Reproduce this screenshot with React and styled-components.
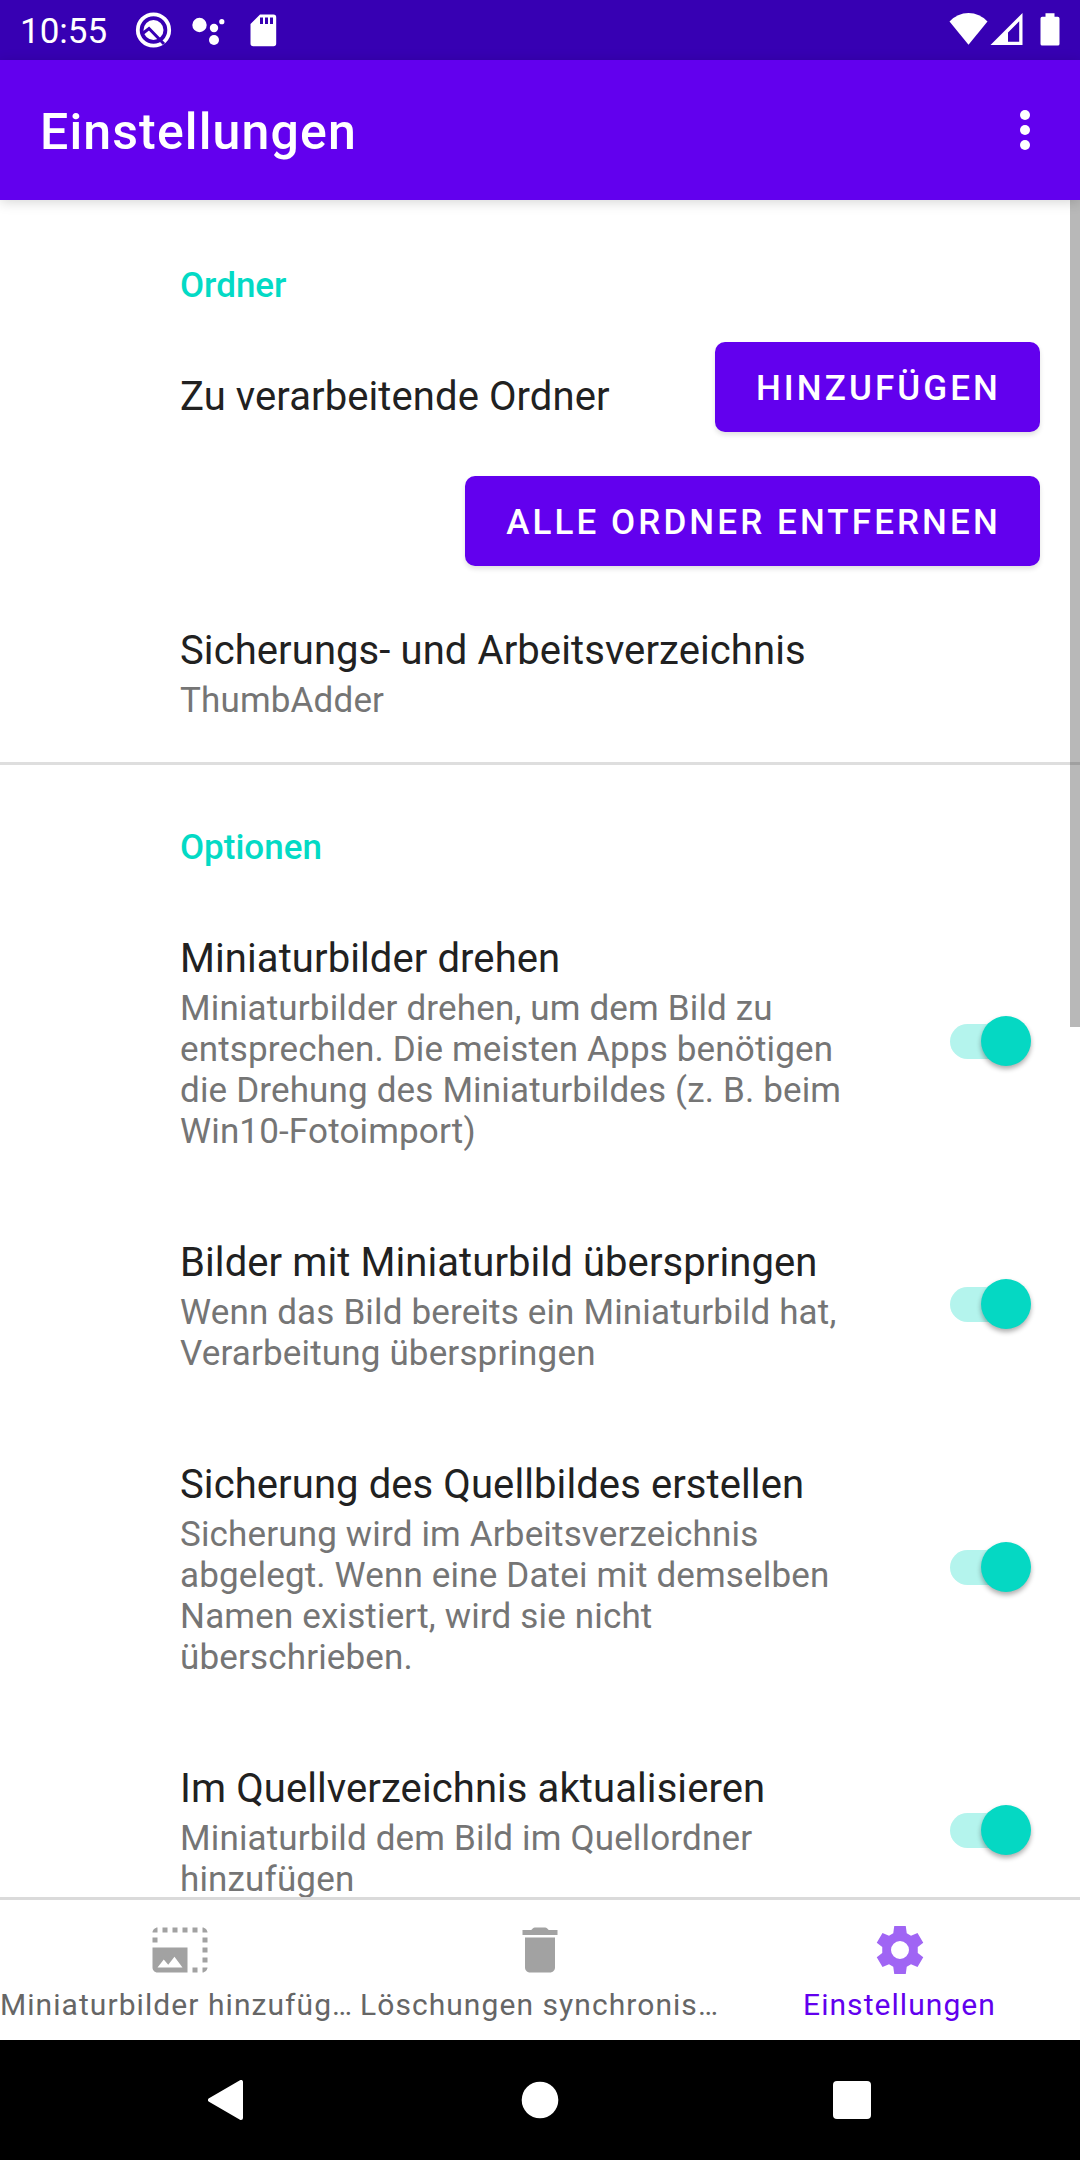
import React from "react";
import styled, { createGlobalStyle } from "styled-components";

const GlobalStyle = createGlobalStyle`
  * { box-sizing: border-box; }
  body {
    margin: 0;
    background: #fff;
    font-family: Roboto, "Liberation Sans", sans-serif;
  }
`;

const Screen = styled.div`
  width: 1080px;
  height: 2160px;
  display: flex;
  flex-direction: column;
  overflow: hidden;
  background: #fff;
`;

const StatusBar = styled.div`
  height: 60px;
  flex: none;
  display: flex;
  align-items: center;
  padding: 0 20px;
  background: #3700b3;
  color: #fff;
`;

const Clock = styled.span`
  width: 113px;
  font-size: 35px;
  line-height: 41px;
  padding-top: 2px;
`;

const StatusIcon = styled.svg`
  display: block;
  flex: none;
  width: ${(p) => p.$w}px;
  height: 60px;
  margin-left: ${(p) => p.$gap || 0}px;
  fill: #fff;
`;

const Spacer = styled.div`
  flex: 1;
`;

const AppBar = styled.header`
  height: 140px;
  flex: none;
  display: flex;
  align-items: center;
  justify-content: space-between;
  padding: 4px 50px 0 40px;
  background: #6200ee;
  color: #fff;
  box-shadow: 0 2px 12px rgba(0, 0, 0, 0.17);
  z-index: 1;
`;

const AppTitle = styled.h1`
  margin: 0;
  font-size: 50px;
  line-height: 60px;
  font-weight: 500;
  letter-spacing: 1.14px;
`;

const MenuButton = styled.button`
  display: flex;
  flex-direction: column;
  gap: 5px;
  padding: 0;
  margin-bottom: 4px;
  border: 0;
  background: none;
`;

const MenuDot = styled.span`
  width: 10px;
  height: 10px;
  border-radius: 50%;
  background: #fff;
`;

const Content = styled.main`
  position: relative;
  height: 1697px;
  flex: none;
  overflow: hidden;
`;

const ScrollThumb = styled.div`
  position: absolute;
  top: 0;
  right: 0;
  width: 10px;
  height: 827px;
  background: rgba(0, 0, 0, 0.28);
`;

const Category = styled.h2`
  height: 128px;
  margin: 0;
  padding: ${(p) => (p.$divided ? 62 : 65)}px 0 0 180px;
  border-top: ${(p) => (p.$divided ? "3px solid #dedede" : "0")};
  color: #03dac5;
  font-size: 35px;
  line-height: 41px;
  font-weight: 500;
`;

const Row = styled.div`
  display: flex;
  justify-content: space-between;
  padding: 45px 40px ${(p) => (p.$last ? 41 : 42)}px 180px;
`;

const FolderRow = styled(Row)`
  height: 254px;
  padding: 14px 40px 0 180px;
`;

const FolderLabel = styled.div`
  width: 0;
  padding-top: 31px;
  white-space: nowrap;
`;

const Actions = styled.div`
  display: flex;
  flex-direction: column;
  align-items: flex-end;
  gap: 44px;
`;

const Button = styled.button`
  height: 90px;
  width: ${(p) => p.$w}px;
  padding: 2px 0 0 2px;
  border: 0;
  border-radius: 10px;
  background: #6200ee;
  color: #fff;
  font-family: inherit;
  font-size: 35px;
  font-weight: 500;
  letter-spacing: 3.09px;
  text-transform: uppercase;
  white-space: nowrap;
  box-shadow: 0 3px 5px rgba(0, 0, 0, 0.12);
`;

const RowText = styled.div`
  width: 680px;
`;

const RowTitle = styled.div`
  font-size: 40px;
  line-height: 47px;
  letter-spacing: 0.09px;
  color: #212121;
  white-space: nowrap;
`;

const Summary = styled.div`
  margin-top: 6px;
  font-size: 35px;
  line-height: 41px;
  letter-spacing: 0.16px;
  color: #757575;
`;

const Toggle = styled.div`
  align-self: center;
  width: 75px;
  height: 35px;
  margin: 0 15px 5px 0;
  display: flex;
  align-items: center;
  justify-content: flex-end;
  border-radius: 18px;
  background: #b4f4ed;
`;

const ToggleThumb = styled.div`
  flex: none;
  width: 50px;
  height: 50px;
  margin-right: -6px;
  border-radius: 50%;
  background: #05d8c3;
  box-shadow: 0 3px 5px rgba(0, 0, 0, 0.32);
`;

const TabBar = styled.nav`
  height: 143px;
  flex: none;
  display: grid;
  grid-template-columns: repeat(3, 360px);
  border-top: 3px solid #dadada;
  background: #fff;
`;

const Tab = styled.div`
  display: flex;
  flex-direction: column;
  align-items: center;
  padding-top: 20px;
  color: ${(p) => (p.$active ? "#6200ee" : "#666")};
`;

const TabIcon = styled.svg`
  display: block;
  width: 60px;
  height: 60px;
  fill: currentColor;
  opacity: 0.6;
`;

const TabLabel = styled.span`
  width: 360px;
  margin-top: 7px;
  padding-right: 1px;
  font-size: 30px;
  line-height: 35px;
  letter-spacing: 1.06px;
  white-space: nowrap;
  text-align: ${(p) => (p.$fill ? "left" : "center")};
`;

const NavBar = styled.div`
  height: 120px;
  flex: none;
  display: flex;
  align-items: center;
  justify-content: space-between;
  padding: 0 208px;
  background: #000;
`;

const NavIcon = styled.svg`
  display: block;
  width: 40px;
  height: 40px;
  fill: #fff;
`;

const options = [
  {
    title: "Miniaturbilder drehen",
    lines: [
      "Miniaturbilder drehen, um dem Bild zu",
      "entsprechen. Die meisten Apps benötigen",
      "die Drehung des Miniaturbildes (z. B. beim",
      "Win10-Fotoimport)",
    ],
  },
  {
    title: "Bilder mit Miniaturbild überspringen",
    lines: ["Wenn das Bild bereits ein Miniaturbild hat,", "Verarbeitung überspringen"],
  },
  {
    title: "Sicherung des Quellbildes erstellen",
    lines: [
      "Sicherung wird im Arbeitsverzeichnis",
      "abgelegt. Wenn eine Datei mit demselben",
      "Namen existiert, wird sie nicht",
      "überschrieben.",
    ],
  },
  {
    title: "Im Quellverzeichnis aktualisieren",
    lines: ["Miniaturbild dem Bild im Quellordner", "hinzufügen"],
  },
];

const PhotoSizeIcon = () => (
  <TabIcon viewBox="0 0 24 24">
    <path d="M21 15h2v2h-2v-2zm0-4h2v2h-2v-2zm2 8h-2v2c1 0 2-1 2-2zM13 3h2v2h-2V3zm8 4h2v2h-2V7zm0-4v2h2c0-1-1-2-2-2zM1 7h2v2H1V7zm16-4h2v2h-2V3zm0 16h2v2h-2v-2zM3 3C2 3 1 4 1 5h2V3zm6 0h2v2H9V3zM5 3h2v2H5V3zm-4 8v8c0 1.1.9 2 2 2h12V11H1zm2 8l2.5-3.21 1.79 2.15 2.5-3.22L13 19H3z" />
  </TabIcon>
);

const DeleteIcon = () => (
  <TabIcon viewBox="0 0 24 24">
    <path d="M6 19c0 1.1.9 2 2 2h8c1.1 0 2-.9 2-2V7H6v12zM19 4h-3.5l-.71-.71c-.18-.18-.44-.29-.7-.29H9.91c-.26 0-.52.11-.7.29L8.5 4H5v2h14V4z" />
  </TabIcon>
);

const SettingsIcon = () => (
  <TabIcon viewBox="0 0 24 24">
    <path
      fillRule="evenodd"
      d="M9.7 2.4H14.3L14.7 5.3 16.4 6.3 19 5.2 21.3 9.1 19.1 10.8V13.2L21.3 14.9 19 18.8 16.4 17.700 14.700 18.700 14.300 21.600H9.700L9.300 18.700 7.600 17.700 5 18.800 2.700 14.900 4.900 13.200V10.800L2.700 9.100 5 5.200 7.600 6.300 9.300 5.300zM12 8.400a3.600 3.600 0 1 0 0 7.200 3.600 3.600 0 1 0 0-7.200z"
    />
  </TabIcon>
);

export default function App() {
  return (
    <>
      <GlobalStyle />
      <Screen>
        <StatusBar>
          <Clock>10:55</Clock>
          <StatusIcon $w={42} viewBox="133 0 42 60">
            <circle cx="153.500" cy="30" r="15.700" fill="none" stroke="#fff" strokeWidth="3.800" />
            <circle cx="153.500" cy="30" r="10" />
            <path d="M142 34l7-5.500L164 44" fill="none" stroke="#3700b3" strokeWidth="3" />
          </StatusIcon>
          <StatusIcon $w={42} $gap={14} viewBox="189 0 42 60">
            <circle cx="199.500" cy="25" r="7.200" />
            <circle cx="214" cy="28" r="4.200" />
            <circle cx="221.800" cy="21.700" r="2.600" />
            <circle cx="214" cy="40" r="5" />
          </StatusIcon>
          <StatusIcon $w={32} $gap={16} viewBox="247 0 32 60">
            <path
              fillRule="evenodd"
              d="M260 14.500h13.500a2.700 2.700 0 0 1 2.700 2.700v26.400a2.700 2.700 0 0 1-2.700 2.700h-20.300a2.700 2.700 0 0 1-2.700-2.700V24zM260 17.500v6.500h3v-6.500zM265 17.500v6.500h3v-6.500zM270 17.500v6.500h3v-6.500z"
            />
          </StatusIcon>
          <Spacer />
          <StatusIcon $w={39} viewBox="949.500 0 39 60">
            <path d="M969 44.700L950 21.500Q958 13 969 13T988 21.500z" />
          </StatusIcon>
          <StatusIcon $w={34} $gap={2} viewBox="990.500 0 34 60">
            <path
              fillRule="evenodd"
              d="M991 45L1023 13V45zM1008.500 32.500V41.700H1019.700V21.300z"
            />
          </StatusIcon>
          <StatusIcon $w={20} $gap={16} viewBox="1040.500 0 20 60">
            <path d="M1046 13.300h9v3.400h3.300a1.700 1.700 0 0 1 1.700 1.700v25.500a1.700 1.700 0 0 1-1.700 1.700h-15.600a1.700 1.700 0 0 1-1.700-1.700V18.400a1.700 1.700 0 0 1 1.700-1.700h3.300z" />
          </StatusIcon>
        </StatusBar>

        <AppBar>
          <AppTitle>Einstellungen</AppTitle>
          <MenuButton aria-label="Weitere Optionen">
            <MenuDot />
            <MenuDot />
            <MenuDot />
          </MenuButton>
        </AppBar>

        <Content>
          <Category>Ordner</Category>
          <FolderRow>
            <FolderLabel>
              <RowTitle>Zu verarbeitende Ordner</RowTitle>
            </FolderLabel>
            <Actions>
              <Button $w={325}>Hinzufügen</Button>
              <Button $w={575}>Alle Ordner entfernen</Button>
            </Actions>
          </FolderRow>
          <Row $last>
            <RowText>
              <RowTitle>Sicherungs- und Arbeitsverzeichnis</RowTitle>
              <Summary>ThumbAdder</Summary>
            </RowText>
          </Row>

          <Category $divided>Optionen</Category>
          {options.map((option) => (
            <Row key={option.title}>
              <RowText>
                <RowTitle>{option.title}</RowTitle>
                <Summary>
                  {option.lines.map((line) => (
                    <div key={line}>{line}</div>
                  ))}
                </Summary>
              </RowText>
              <Toggle>
                <ToggleThumb />
              </Toggle>
            </Row>
          ))}
          <ScrollThumb />
        </Content>

        <TabBar>
          <Tab>
            <PhotoSizeIcon />
            <TabLabel $fill>Miniaturbilder hinzufüg…</TabLabel>
          </Tab>
          <Tab>
            <DeleteIcon />
            <TabLabel $fill>Löschungen synchronis…</TabLabel>
          </Tab>
          <Tab $active>
            <SettingsIcon />
            <TabLabel>Einstellungen</TabLabel>
          </Tab>
        </TabBar>

        <NavBar>
          <NavIcon viewBox="0 0 40 40">
            <path d="M33 2v36L2 20z" stroke="#fff" strokeWidth="4" strokeLinejoin="round" />
          </NavIcon>
          <NavIcon viewBox="0 0 40 40">
            <circle cx="20" cy="20" r="18.300" />
          </NavIcon>
          <NavIcon viewBox="0 0 40 40">
            <rect x="1" y="1" width="38" height="38" rx="4" />
          </NavIcon>
        </NavBar>
      </Screen>
    </>
  );
}
